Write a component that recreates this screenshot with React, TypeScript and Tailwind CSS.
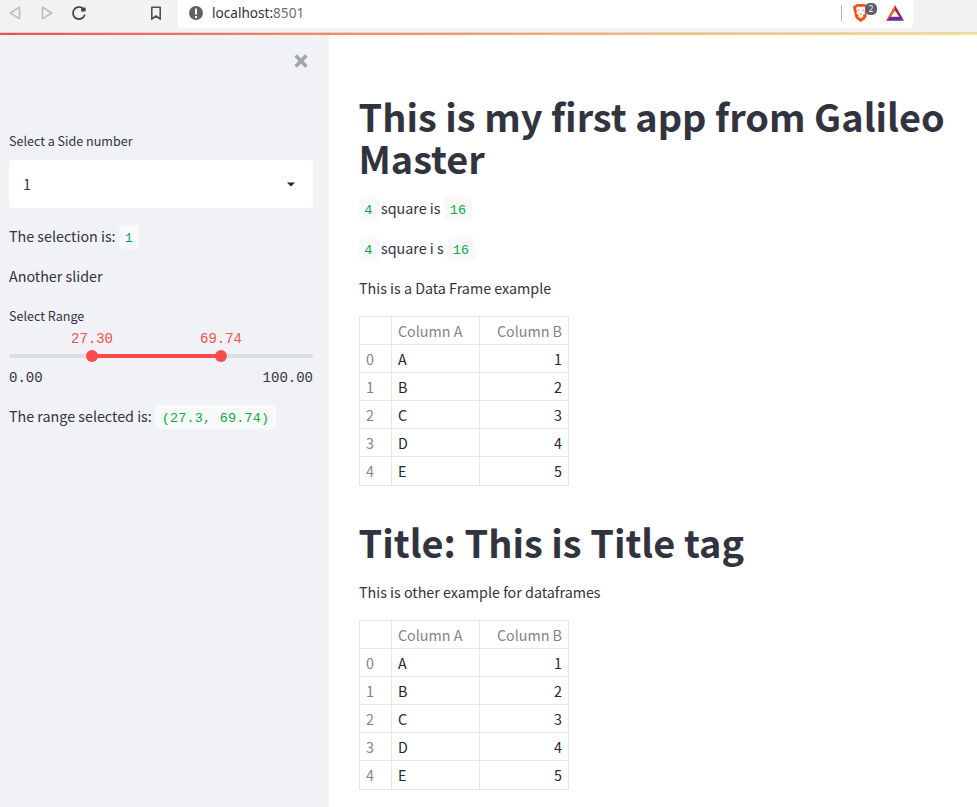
import React from 'react';

const rows = [
  ['0', 'A', '1'],
  ['1', 'B', '2'],
  ['2', 'C', '3'],
  ['3', 'D', '4'],
  ['4', 'E', '5'],
];

function Code({ children, className = '' }: { children: React.ReactNode; className?: string }) {
  return (
    <code
      className={`flex h-6 items-center justify-center rounded-[4px] bg-[#f8f9fb] pt-[3px] font-['Liberation_Mono',monospace] text-[13.4px] leading-[21px] tracking-[0.24px] text-[#09ab3b] ${className}`}
    >
      {children}
    </code>
  );
}

function DataTable() {
  return (
    <div className="flex h-[170px] w-[210px] flex-col border-t border-l border-[#e6e6e8] text-[14.3px] leading-[27px]">
      <div className="flex h-7 border-b border-[#e6e6e8] text-[#82838a]">
        <div className="w-8 border-r border-[#e6e6e8]" />
        <div className="w-[88px] border-r border-[#e6e6e8] pl-1.5 whitespace-nowrap">Column A</div>
        <div className="w-[89px] border-r border-[#e6e6e8] pr-1.5 text-right whitespace-nowrap">Column B</div>
      </div>
      {rows.map(([i, a, b]) => (
        <div key={i} className="flex h-7 border-b border-[#e6e6e8] text-[#262730] last:h-[29px]">
          <div className="w-8 border-r border-[#e6e6e8] pl-1.5 text-[#82838a]">{i}</div>
          <div className="w-[88px] border-r border-[#e6e6e8] pl-1.5">{a}</div>
          <div className="w-[89px] border-r border-[#e6e6e8] pr-1.5 text-right">{b}</div>
        </div>
      ))}
    </div>
  );
}

function Toolbar() {
  return (
    <header className="flex h-[33px] w-full items-start border-b border-[#d5d7da] bg-[#f2f2f2]">
      <svg width="178" height="28" viewBox="0 0 178 28" fill="none" className="shrink-0">
        <path d="M19.5 7.2v11.6L10.4 13z" stroke="#bdbdbd" strokeWidth="1.6" strokeLinejoin="round" />
        <path d="M42.5 7.2v11.6l9.1-5.8z" stroke="#bdbdbd" strokeWidth="1.6" strokeLinejoin="round" />
        <path d="M82.6 8.2A6 6 0 1 0 84.6 15.2" stroke="#3b3e42" strokeWidth="1.7" strokeLinecap="round" />
        <path d="M82 8.4 85 8v2.8l-3.2.2z" fill="#3b3e42" stroke="#3b3e42" strokeWidth="1.2" strokeLinejoin="round" />
        <path d="M151.8 7.2h8.4v12L156 16l-4.2 3.2z" stroke="#4b4e52" strokeWidth="1.6" strokeLinejoin="round" />
      </svg>
      <div className="flex h-7 w-[735px] rounded-b-[4px] bg-white">
        <svg width="34" height="28" viewBox="0 0 34 28" className="shrink-0">
          <circle cx="18" cy="13" r="7" fill="#5f6368" />
          <path d="M17 8.5h2v6h-2zM17 16h2v2h-2z" fill="#fff" />
        </svg>
        <div className="w-[629px] font-['Noto_Sans',sans-serif] text-[13.6px] leading-[26px] text-[#303236]">
          localhost:<span className="text-[#6b6e72]">8501</span>
        </div>
        <svg width="72" height="28" viewBox="841 0 72 28" className="shrink-0">
          <path d="M841.5 5v16" stroke="#b4b4b4" />
          <path d="M857 4h8l2.6 3.2-.2 2-1 7.8-1.6 2.2-4 2.8-4-2.8-1.6-2.2-1.8-8.2-.3-1.8 1.4-1.8h1z" fill="#fb4f13" />
          <path d="M857.4 6.4 860.8 7l3.4-.6 1.4 2.2-.9 2.6.3 2.5-2 1.4.2 1.6-2.4 1.9-2.4-1.9.2-1.6-2-1.4.3-2.5-1-2.6z" fill="#fff" />
          <path d="m857.6 10 1.8.7M864 10l-1.8.7M859.3 13.6l1.5 1 1.5-1" stroke="#fb4f13" strokeWidth=".8" fill="none" />
          <rect x="865" y="3" width="12" height="12" rx="5" fill="#5b5f6c" />
          <text x="871" y="12" textAnchor="middle" fontSize="8" fill="#fff" fontFamily="Noto Sans">2</text>
          <path d="M895 5v5.4l-4.8 7.1L886 20.7z" fill="#ff5722" />
          <path d="M895 5v5.4l4.8 7.1 4.2 3.2z" fill="#9e1f63" />
          <path d="M886 20.7l4.2-3.9h9.6l4.2 3.9z" fill="#662d91" />
        </svg>
      </div>
    </header>
  );
}

function Sidebar() {
  return (
    <aside className="flex w-[329px] shrink-0 flex-col bg-[#f0f2f6] pr-4 pl-[9px]">
      <div className="flex h-[95px] justify-end pt-[19px] pr-[5px]">
        <svg width="14" height="14" viewBox="0 0 14 14">
          <path d="m1.6 1.6 10.8 10.8M12.4 1.6 1.6 12.4" stroke="#a3a5ae" strokeWidth="3.6" />
        </svg>
      </div>
      <div className="h-[30px] text-[12.55px] leading-[22px]">Select a Side number</div>
      <div className="flex h-12 items-center justify-between rounded-[4px] bg-white pr-[18px] pl-[14px] text-[14.3px]">
        <span>1</span>
        <svg width="8" height="5" viewBox="0 0 8 5">
          <path d="M0 .5h8L4.6 4a.9.9 0 0 1-1.2 0z" fill="#262730" />
        </svg>
      </div>
      <p className="mt-[17px] flex h-6 gap-[3px] text-[14.3px] leading-[22px] whitespace-nowrap">
        <span className="w-[107px]">The selection is:</span>
        <Code className="w-5">1</Code>
      </p>
      <p className="mt-4 h-6 text-[14.3px] leading-[22px]">Another slider</p>
      <div className="mt-4 h-[22px] text-[12.55px] leading-[22px]">Select Range</div>
      <div className="flex h-[22px] pl-[62px] font-['Liberation_Mono',monospace] text-[14px] leading-[25px] text-[#ff4b4b]">
        <span className="w-[129px]">27.30</span>
        <span>69.74</span>
      </div>
      <div className="mt-[1px] flex h-3 items-center">
        <div className="h-1 w-[78px] rounded-l-full bg-[#dbdde6]" />
        <div className="-mx-[1px] size-3 shrink-0 rounded-full bg-[#ff4b4b]" />
        <div className="-mx-[1px] h-1 w-[121px] bg-[#ff4b4b]" />
        <div className="relative -mx-[1px] size-3 shrink-0 rounded-full bg-[#ff4b4b]" />
        <div className="h-1 flex-1 rounded-r-full bg-[#dbdde6]" />
      </div>
      <div className="mt-[5px] flex h-[22px] justify-between font-['Liberation_Mono',monospace] text-[14px] leading-[23px]">
        <span>0.00</span>
        <span>100.00</span>
      </div>
      <p className="mt-4 flex h-6 gap-[3px] text-[14.3px] leading-[22px] whitespace-nowrap">
        <span className="w-[143px]">The range selected is:</span>
        <Code className="w-[121px]">(27.3, 69.74)</Code>
      </p>
    </aside>
  );
}

export default function App() {
  return (
    <div className="flex h-[807px] w-[977px] flex-col overflow-hidden bg-white font-['Noto_Sans_CJK_SC',sans-serif] text-[#31333f]">
      <Toolbar />
      <div className="h-0.5 w-full shrink-0 bg-linear-to-r from-[#ff4b4b] to-[#ffe380]" />
      <div className="flex flex-1">
        <Sidebar />
        <main className="flex flex-1 flex-col pt-[60px] pl-[30px] text-[14.3px] leading-[22px]">
          <h1 className="-ml-[0.5px] h-[86px] text-[37.9px] leading-[42px] font-bold whitespace-nowrap">
            This is my first app from Galileo
            <br />
            Master
          </h1>
          <p className="mt-4 flex h-6 whitespace-nowrap">
            <Code className="w-[19px]">4</Code>
            <span className="w-[66px] pl-[3px]">square is</span>
            <Code className="w-7">16</Code>
          </p>
          <p className="mt-4 flex h-6 whitespace-nowrap">
            <Code className="w-[19px]">4</Code>
            <span className="w-[69px] pl-[3px]">square i s</span>
            <Code className="w-7">16</Code>
          </p>
          <p className="mt-4 h-6">This is a Data Frame example</p>
          <div className="mt-[15px]">
            <DataTable />
          </div>
          <h1 className="mt-[35px] -ml-[0.5px] h-[44px] text-[37.9px] leading-[42px] font-bold whitespace-nowrap">
            Title: This is Title tag
          </h1>
          <p className="mt-4 h-6">This is other example for dataframes</p>
          <div className="mt-[15px]">
            <DataTable />
          </div>
        </main>
      </div>
    </div>
  );
}
